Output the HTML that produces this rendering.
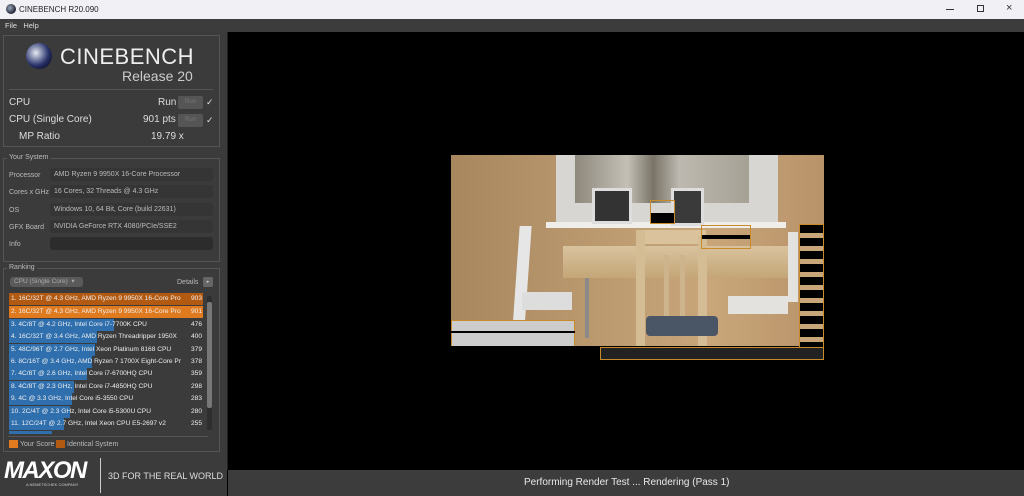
<!DOCTYPE html>
<html><head><meta charset="utf-8"><style>
*{margin:0;padding:0;box-sizing:border-box}
body{width:1024px;height:496px;overflow:hidden;background:#000;font-family:"Liberation Sans",sans-serif;position:relative}
.a{position:absolute}
.t{color:#ddd;white-space:nowrap}
.sm{font-size:7px;color:#bbb}
.row{position:absolute;left:9px;height:12px;width:194px;font-size:6.6px;color:#eee;line-height:12px;white-space:nowrap}
.row .b{position:absolute;left:0;top:0;height:12px;background:#2f6fae}
.row span{position:absolute;left:2px;top:0;width:172px;overflow:hidden}
.row i{position:absolute;right:1px;top:0;font-style:normal}
.fld{position:absolute;left:50px;width:163px;height:13px;background:#353535;border-radius:3px;font-size:7px;color:#bbb;line-height:13px;padding-left:4px}
.lab{position:absolute;left:9px;font-size:7px;color:#bbb}
</style></head><body>
<div class="a" style="left:0;top:0;width:1024px;height:19px;background:#f1f0f4"></div>
<div class="a" style="left:6px;top:4px;width:10px;height:10px;border-radius:50%;background:radial-gradient(circle at 40% 40%,#9ab,#223 70%)"></div>
<div class="a" style="left:19px;top:5px;font-size:8px;color:#222">CINEBENCH R20.090</div>
<div class="a" style="left:946px;top:9px;width:8px;height:1px;background:#333"></div>
<div class="a" style="left:977px;top:5px;width:7px;height:7px;border:1px solid #333"></div>
<div class="a" style="left:1006px;top:2px;font-size:11px;color:#333">×</div>
<div class="a" style="left:0;top:19px;width:1024px;height:13px;background:#3c3c3c"></div>
<div class="a t" style="left:5px;top:21px;font-size:7.5px">File&nbsp;&nbsp;&nbsp;Help</div>
<div class="a" style="left:0;top:32px;width:227px;height:438px;background:#3b3b3b"></div>
<div class="a" style="left:3px;top:35px;width:217px;height:112px;border:1px solid #555"></div>
<div class="a" style="left:26px;top:43px;width:26px;height:26px;border-radius:50%;background:radial-gradient(circle at 38% 38%,#e8eaf0 0,#8d95b5 25%,#2a336a 55%,#0e1230 80%)"></div>
<div class="a" style="left:60px;top:44px;font-size:22px;color:#eee;letter-spacing:0.5px">CINEBENCH</div>
<div class="a" style="left:122px;top:68px;font-size:14px;color:#ccc">Release 20</div>
<div class="a" style="left:9px;top:89px;width:204px;height:1px;background:#555"></div>
<div class="a t" style="left:9px;top:97px;font-size:10px">CPU</div>
<div class="a t" style="left:158px;top:97px;font-size:10px">Run</div>
<div class="a" style="left:178px;top:96px;width:25px;height:13px;background:#555;border-radius:2px;font-size:6px;color:#777;text-align:center;line-height:13px">Run</div>
<div class="a t" style="left:206px;top:97px;font-size:9px">✓</div>
<div class="a t" style="left:9px;top:114px;font-size:10px">CPU (Single Core)</div>
<div class="a t" style="left:143px;top:114px;font-size:10px">901 pts</div>
<div class="a" style="left:178px;top:114px;width:25px;height:13px;background:#555;border-radius:2px;font-size:6px;color:#777;text-align:center;line-height:13px">Run</div>
<div class="a t" style="left:206px;top:115px;font-size:9px">✓</div>
<div class="a t" style="left:19px;top:131px;font-size:10px">MP Ratio</div>
<div class="a t" style="left:151px;top:131px;font-size:10px">19.79 x</div>
<div class="a" style="left:3px;top:158px;width:217px;height:104px;border:1px solid #555"></div>
<div class="a sm" style="left:7px;top:154px;background:#3b3b3b;padding:0 2px">Your System</div>
<div class="lab" style="top:172px">Processor</div><div class="fld" style="top:168px">AMD Ryzen 9 9950X 16-Core Processor</div>
<div class="lab" style="top:189px">Cores x GHz</div><div class="fld" style="top:185px">16 Cores, 32 Threads @ 4.3 GHz</div>
<div class="lab" style="top:207px">OS</div><div class="fld" style="top:203px">Windows 10, 64 Bit, Core (build 22631)</div>
<div class="lab" style="top:224px">GFX Board</div><div class="fld" style="top:220px">NVIDIA GeForce RTX 4080/PCIe/SSE2</div>
<div class="lab" style="top:241px">Info</div><div class="fld" style="top:237px;background:#2c2c2c"></div>
<div class="a" style="left:3px;top:268px;width:217px;height:184px;border:1px solid #555"></div>
<div class="a sm" style="left:7px;top:264px;background:#3b3b3b;padding:0 2px">Ranking</div>
<div class="a" style="left:10px;top:277px;width:73px;height:10px;background:#5a5a5a;border-radius:3px;font-size:6.5px;color:#aaa;line-height:10px;padding-left:4px">CPU (Single Core)&nbsp;&nbsp;▾</div>
<div class="a sm" style="left:177px;top:279px">Details</div>
<div class="a" style="left:203px;top:277px;width:10px;height:10px;background:#666;border-radius:2px;font-size:5px;color:#ccc;text-align:center;line-height:10px">▸</div>
<div class="row" style="top:293px;background:#b35a12"><span>1. 16C/32T @ 4.3 GHz, AMD Ryzen 9 9950X 16-Core Pro</span><i>903</i></div>
<div class="row" style="top:306px;background:#e07a1e"><span>2. 16C/32T @ 4.3 GHz, AMD Ryzen 9 9950X 16-Core Pro</span><i>901</i></div>
<div class="row" style="top:319px"><div class="b" style="width:105px"></div><span>3. 4C/8T @ 4.2 GHz, Intel Core i7-7700K CPU</span><i>476</i></div>
<div class="row" style="top:331px"><div class="b" style="width:88px"></div><span>4. 16C/32T @ 3.4 GHz, AMD Ryzen Threadripper 1950X</span><i>400</i></div>
<div class="row" style="top:344px"><div class="b" style="width:86px"></div><span>5. 48C/96T @ 2.7 GHz, Intel Xeon Platinum 8168 CPU</span><i>379</i></div>
<div class="row" style="top:356px"><div class="b" style="width:83px"></div><span>6. 8C/16T @ 3.4 GHz, AMD Ryzen 7 1700X Eight-Core Pr</span><i>378</i></div>
<div class="row" style="top:368px"><div class="b" style="width:78px"></div><span>7. 4C/8T @ 2.6 GHz, Intel Core i7-6700HQ CPU</span><i>359</i></div>
<div class="row" style="top:381px"><div class="b" style="width:65px"></div><span>8. 4C/8T @ 2.3 GHz, Intel Core i7-4850HQ CPU</span><i>298</i></div>
<div class="row" style="top:393px"><div class="b" style="width:63px"></div><span>9. 4C @ 3.3 GHz, Intel Core i5-3550 CPU</span><i>283</i></div>
<div class="row" style="top:406px"><div class="b" style="width:61px"></div><span>10. 2C/4T @ 2.3 GHz, Intel Core i5-5300U CPU</span><i>280</i></div>
<div class="row" style="top:418px"><div class="b" style="width:55px"></div><span>11. 12C/24T @ 2.7 GHz, Intel Xeon CPU E5-2697 v2</span><i>255</i></div>
<div class="a" style="left:9px;top:431px;width:43px;height:3px;background:#2f6fae"></div>
<div class="a" style="left:207px;top:296px;width:5px;height:134px;background:#2e2e2e;border-radius:2px"></div>
<div class="a" style="left:207px;top:302px;width:5px;height:106px;background:#777;border-radius:2px"></div>
<div class="a" style="left:8px;top:436px;width:200px;height:1px;background:#555"></div>
<div class="a" style="left:9px;top:440px;width:9px;height:8px;background:#e07a1e"></div>
<div class="a sm" style="left:20px;top:441px">Your Score</div>
<div class="a" style="left:56px;top:440px;width:9px;height:8px;background:#b35a12"></div>
<div class="a sm" style="left:67px;top:441px">Identical System</div>
<div class="a" style="left:0;top:454px;width:227px;height:42px;background:#3b3b3b"></div>
<div class="a" style="left:4px;top:457px;font-size:24px;font-weight:bold;font-style:italic;color:#fff;letter-spacing:-1.5px">MAXON</div>
<div class="a" style="left:26px;top:482px;font-size:4px;color:#ccc">A NEMETSCHEK COMPANY</div>
<div class="a" style="left:100px;top:458px;width:1px;height:35px;background:#ccc"></div>
<div class="a" style="left:108px;top:471px;font-size:9px;color:#ddd">3D FOR THE REAL WORLD</div>
<div class="a" style="left:227px;top:32px;width:1px;height:438px;background:#222"></div>
<div class="a" style="left:228px;top:470px;width:796px;height:26px;background:#3c3c3c"></div>
<div class="a" style="left:524px;top:477px;font-size:10px;color:#e8e8e8">Performing Render Test ... Rendering (Pass 1)</div>
<!-- render image -->
<div class="a" style="left:451px;top:155px;width:373px;height:192px;background:linear-gradient(90deg,#a8875f 0,#bb9a70 40%,#c9a67a 70%,#b89269 100%)"></div>
<div class="a" style="left:556px;top:155px;width:222px;height:70px;background:#d8d6d2"></div>
<div class="a" style="left:575px;top:155px;width:174px;height:48px;background:linear-gradient(90deg,#8e887c,#c4c0b6 30%,#7a7468 45%,#bdb9b0 60%,#a6a195)"></div>
<div class="a" style="left:546px;top:222px;width:240px;height:6px;background:#f0eeea"></div>
<div class="a" style="left:592px;top:188px;width:40px;height:36px;background:#333;border:3px solid #ddd"></div>
<div class="a" style="left:671px;top:188px;width:33px;height:38px;background:#3a3a3a;border:3px solid #ddd"></div>
<div class="a" style="left:563px;top:246px;width:235px;height:32px;background:linear-gradient(180deg,#d9c39e,#c4a677)"></div>
<div class="a" style="left:585px;top:278px;width:4px;height:60px;background:#8a8a88"></div>
<div class="a" style="left:516px;top:226px;width:12px;height:105px;background:#e6e6e6;transform:skewX(-4deg)"></div>
<div class="a" style="left:522px;top:292px;width:50px;height:18px;background:#ddd"></div>
<div class="a" style="left:636px;top:230px;width:70px;height:14px;background:#d9c29c"></div>
<div class="a" style="left:636px;top:230px;width:9px;height:117px;background:#d4bc94"></div>
<div class="a" style="left:698px;top:236px;width:9px;height:111px;background:#d4bc94"></div>
<div class="a" style="left:664px;top:255px;width:5px;height:70px;background:#cdb48c"></div>
<div class="a" style="left:680px;top:255px;width:5px;height:70px;background:#cdb48c"></div>
<div class="a" style="left:646px;top:316px;width:72px;height:20px;background:#4a5566;border-radius:4px"></div>
<div class="a" style="left:788px;top:232px;width:10px;height:70px;background:#e4e2de"></div>
<div class="a" style="left:728px;top:296px;width:60px;height:18px;background:#e4e2de"></div>
<div class="a" style="left:451px;top:320px;width:124px;height:27px;background:#ccc;border:1px solid #c88a2a"></div>
<div class="a" style="left:451px;top:331px;width:124px;height:2px;background:#000"></div>
<div class="a" style="left:451px;top:346px;width:373px;height:14px;background:#000"></div>
<div class="a" style="left:600px;top:347px;width:224px;height:13px;background:#222;border:1px solid #c88a2a"></div>
<div class="a" style="left:799px;top:224px;width:25px;height:124px;background:repeating-linear-gradient(180deg,#000 0,#000 8px,#c9a57a 8px,#c9a57a 13px);border:1px solid #c88a2a"></div>
<div class="a" style="left:650px;top:200px;width:25px;height:24px;border:1px solid #c88a2a;background:linear-gradient(180deg,transparent 55%,#000 55%)"></div>
<div class="a" style="left:701px;top:225px;width:50px;height:24px;border:1px solid #c88a2a;background:linear-gradient(180deg,transparent 40%,#000 40%,#000 60%,transparent 60%)"></div>
</body></html>
